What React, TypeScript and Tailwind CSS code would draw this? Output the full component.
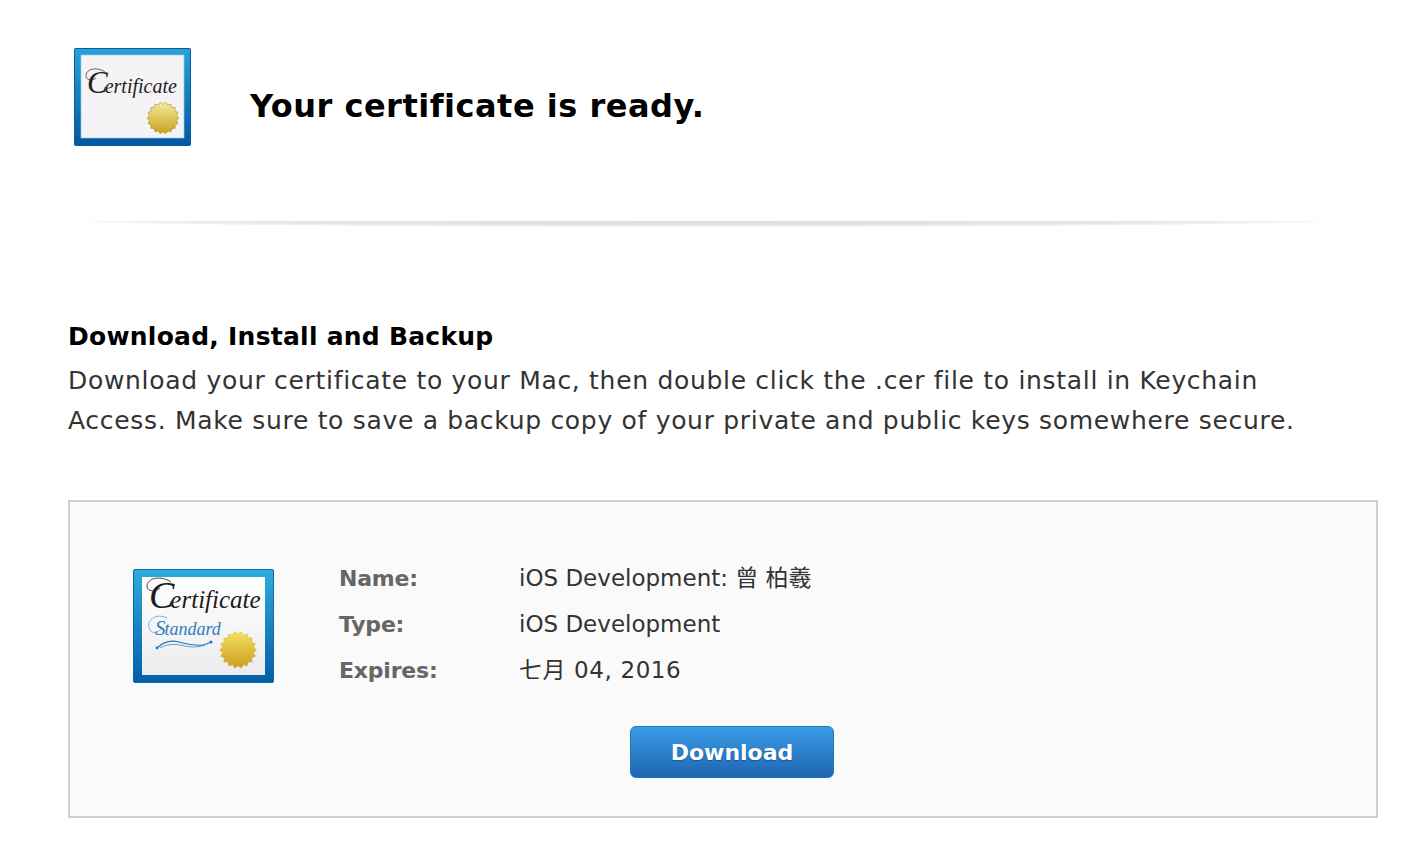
const sealPoints = (cx: number, cy: number, r: number, inner: number, n: number) =>
  Array.from({ length: n * 2 }, (_, i) => {
    const a = (Math.PI * i) / n;
    const d = i % 2 ? inner : r;
    return `${(cx + Math.cos(a) * d).toFixed(2)},${(cy + Math.sin(a) * d).toFixed(2)}`;
  }).join(" ");

function SmallCertificate() {
  return (
    <svg width="117" height="98" viewBox="0 0 117 98" className="shrink-0 block">
      <defs>
        <linearGradient id="sFrame" x1="0" y1="0" x2="0" y2="1">
          <stop offset="0" stopColor="#27a3d8" />
          <stop offset="1" stopColor="#0357a3" />
        </linearGradient>
        <linearGradient id="sSeal" x1="0" y1="0" x2="0" y2="1">
          <stop offset="0" stopColor="#f5eb9c" />
          <stop offset="1" stopColor="#c6a31c" />
        </linearGradient>
      </defs>
      <rect x="0.5" y="0.5" width="116" height="97" rx="1" fill="url(#sFrame)" stroke="#0a5a9e" />
      <rect x="7" y="7" width="103" height="83" fill="#f4f4f6" stroke="#8fcbe6" strokeWidth="0.7" />
      <path d="M31 24 C24 19 13 20 12 27 C11 32 18 33 22 30" fill="none" stroke="#222" strokeWidth="0.7" />
      <text x="13" y="45" fontFamily="'Liberation Serif', serif" fontStyle="italic" fill="#222">
        <tspan fontSize="31">C</tspan>
        <tspan fontSize="20" dx="-3">ertificate</tspan>
      </text>
      <polygon points={sealPoints(89, 70, 16, 13.8, 18)} fill="url(#sSeal)" stroke="#a68d1e" strokeWidth="0.6" />
    </svg>
  );
}

function LargeCertificate() {
  return (
    <svg width="141" height="114" viewBox="0 0 141 114" className="shrink-0 block">
      <defs>
        <linearGradient id="lFrame" x1="0" y1="0" x2="0" y2="1">
          <stop offset="0" stopColor="#2fabdc" />
          <stop offset="1" stopColor="#035ea8" />
        </linearGradient>
        <linearGradient id="lSeal" x1="0" y1="0" x2="0" y2="1">
          <stop offset="0" stopColor="#f6e05e" />
          <stop offset="1" stopColor="#cb9c20" />
        </linearGradient>
        <linearGradient id="lPaper" x1="0" y1="0" x2="0" y2="1">
          <stop offset="0" stopColor="#ffffff" />
          <stop offset="1" stopColor="#ececee" />
        </linearGradient>
      </defs>
      <rect x="0.5" y="0.5" width="140" height="113" rx="1.5" fill="url(#lFrame)" stroke="#0d6aa8" />
      <rect x="9" y="8" width="123" height="98" fill="url(#lPaper)" />
      <path d="M38 13 C28 6 14 9 14 17 C14 23 22 23 27 19" fill="none" stroke="#1c1c1c" strokeWidth="0.8" />
      <text x="16" y="39" fontFamily="'Liberation Serif', serif" fontStyle="italic" fill="#1c1c1c">
        <tspan fontSize="38">C</tspan>
        <tspan fontSize="25" dx="-4">ertificate</tspan>
      </text>
      <path d="M34 49 C24 44 14 50 16 58 C17 65 24 65 28 60" fill="none" stroke="#2f80bd" strokeWidth="0.6" />
      <text x="22" y="66" fontFamily="'Liberation Serif', serif" fontStyle="italic" fill="#2f80bd">
        <tspan fontSize="21">S</tspan>
        <tspan fontSize="18" dx="-1">tandard</tspan>
      </text>
      <path d="M24 79 C30 73 38 71 46 73 C54 75 64 77 70 76 C74 75 76 74 78 73" fill="none" stroke="#1f78ba" strokeWidth="1.1" />
      <path d="M27 79 C34 75 40 75 47 76 C55 78 64 79 72 76" fill="none" stroke="#1f78ba" strokeWidth="0.7" />
      <circle cx="24" cy="79" r="1.4" fill="#1f78ba" />
      <circle cx="78" cy="73" r="1.6" fill="#1f78ba" />
      <polygon points={sealPoints(105, 81, 18.5, 15.8, 18)} fill="url(#lSeal)" stroke="#c8a52c" strokeWidth="0.4" />
    </svg>
  );
}

function DetailRow({ label, value, valueClass }: { label: string; value: string; valueClass?: string }) {
  return (
    <div className="flex h-[46px] items-center">
      <div className="w-[180px] font-bold text-[22px] tracking-[-0.2px] text-[#666]">{label}</div>
      <div className={`text-[#333] ${valueClass ?? ""}`}>{value}</div>
    </div>
  );
}

export default function App() {
  return (
    <div
      className="h-[862px] bg-white overflow-hidden"
      style={{ fontFamily: "'DejaVu Sans', 'Noto Sans CJK TC', sans-serif" }}
    >
      {/* Header */}
      <div className="flex items-center pl-[74px] pt-[48px]">
        <SmallCertificate />
        <h1 className="ml-[59px] mt-[18px] text-[32px] font-bold text-black tracking-[0.5px]">Your certificate is ready.</h1>
      </div>

      {/* Divider */}
      <div className="mx-[65px] mt-[75px] h-[6px] bg-[radial-gradient(ellipse_at_top,#dddddd_0%,#e4e4e4_48%,#f2f2f2_64%,#ffffff_71%)]" />

      {/* Instructions */}
      <div className="px-[68px] pt-[90px]">
        <h2 className="text-[25px] leading-[40px] mb-[4px] font-bold text-black tracking-[0.25px]">Download, Install and Backup</h2>
        <p className="text-[25px] leading-[40px] text-[#333] tracking-[0.69px]">
          Download your certificate to your Mac, then double click the .cer file to install in Keychain
          <br />
          Access. Make sure to save a backup copy of your private and public keys somewhere secure.
        </p>
      </div>

      {/* Certificate box */}
      <div className="mx-[68px] mt-[59px] w-[1310px] h-[318px] border-2 border-[#cfcfcf] bg-[#fafafa] text-[23px]">
        <div className="flex pl-[63px] pt-[53px]">
          <div className="pt-[14px]">
            <LargeCertificate />
          </div>
          <div className="ml-[65px]">
            <DetailRow label="Name:" value="iOS Development: 曾 柏羲" />
            <DetailRow label="Type:" value="iOS Development" />
            <DetailRow label="Expires:" value="七月 04, 2016" valueClass="tracking-[0.6px]" />
          </div>
        </div>
        <div className="flex justify-center mt-[33px] pl-[18px]">
          <button className="w-[204px] h-[52px] rounded-[6px] border border-[#0f7dbb] bg-gradient-to-b from-[#3c9de8] to-[#1f65b0] text-white font-bold text-[22px] [text-shadow:0_1px_1px_#0d5a9c]">
            Download
          </button>
        </div>
      </div>
    </div>
  );
}
